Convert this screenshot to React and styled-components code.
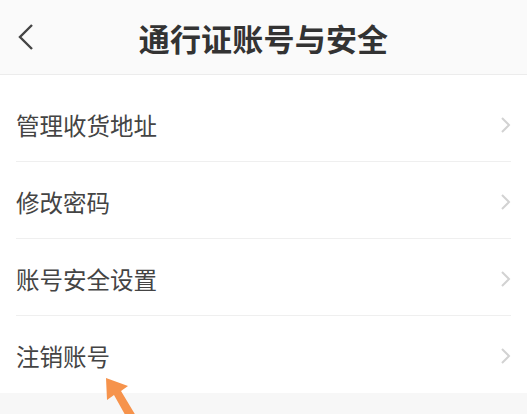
import React from "react";
import styled, { createGlobalStyle } from "styled-components";

const Global = createGlobalStyle`
  html, body { margin: 0; padding: 0; background: #f7f7f7; }
  body { font-family: "Noto Sans CJK SC", "Noto Sans", sans-serif; }
  * { box-sizing: border-box; }
`;

const Page = styled.div`
  position: relative;
  width: 527px;
  height: 414px;
  overflow: hidden;
  background: #f7f7f7;
`;

const Header = styled.header`
  height: 75px;
  background: #fafafa;
  border-bottom: 1px solid #ececec;
  display: grid;
  grid-template-columns: 60px 1fr 60px;
  align-items: center;
`;

const Back = styled.button`
  border: 0;
  background: transparent;
  padding: 0 0 0 16px;
  display: flex;
  align-items: center;
  height: 100%;
`;

const Title = styled.h1`
  margin: 0;
  text-align: center;
  font-size: 31px;
  font-weight: 700;
  color: #333;
  letter-spacing: 0.2px;
`;

const List = styled.ul`
  list-style: none;
  margin: 0;
  padding: 10px 0 0;
  background: #fff;
`;

const Row = styled.li`
  height: 77px;
  padding: 3px 15px 0 16px;
  display: flex;
  align-items: center;
  justify-content: space-between;
  position: relative;
  &:not(:last-child)::after {
    content: "";
    position: absolute;
    left: 16px;
    right: 16px;
    bottom: 0;
    height: 1px;
    background: #efefef;
  }
`;

const Label = styled.span`
  font-size: 23.5px;
  color: #444;
`;

const Arrow = styled.svg`
  position: absolute;
  left: 98px;
  top: 372px;
`;

const Chevron = () => (
  <svg width="12" height="18" viewBox="0 0 12 18">
    <path d="M2 2 L9 9 L2 16" fill="none" stroke="#d2d2d2" strokeWidth="2" />
  </svg>
);

const items = ["管理收货地址", "修改密码", "账号安全设置", "注销账号"];

export default function App() {
  return (
    <Page>
      <Global />
      <Header>
        <Back aria-label="返回">
          <svg width="20" height="28" viewBox="0 0 20 28">
            <path d="M16 2 L4 14 L16 26" fill="none" stroke="#444" strokeWidth="2.4" />
          </svg>
        </Back>
        <Title>通行证账号与安全</Title>
        <span />
      </Header>
      <List>
        {items.map((t) => (
          <Row key={t}>
            <Label>{t}</Label>
            <Chevron />
          </Row>
        ))}
      </List>
      <Arrow width="50" height="50" viewBox="0 0 50 50">
        <path d="M8 6 L30 14 L23 19 L38 44 L30 48 L16 23 L9 28 Z" fill="#f6934c" />
      </Arrow>
    </Page>
  );
}
